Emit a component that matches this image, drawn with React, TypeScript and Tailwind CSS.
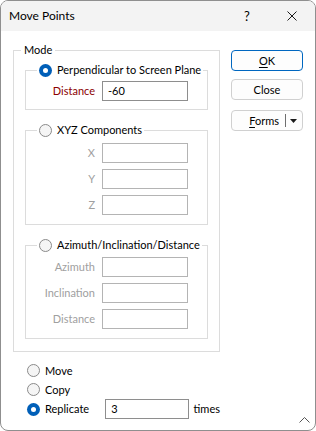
import type { ReactNode } from 'react';

function Radio({ checked }: { checked?: boolean }) {
  if (checked) {
    return (
      <span className="w-[13px] h-[13px] rounded-full bg-[#005fb8] flex items-center justify-center shrink-0">
        <span className="w-[5px] h-[5px] rounded-full bg-white" />
      </span>
    );
  }
  return <span className="w-[13px] h-[13px] rounded-full border border-[#8a8a8a] bg-[#f5f5f5] shrink-0" />;
}

function Field({ label, value, disabled, red }: { label: string; value?: string; disabled?: boolean; red?: boolean }) {
  const labelColor = red ? 'text-[#8b0000]' : disabled ? 'text-[#a0a0a0]' : 'text-black';
  return (
    <div className="flex items-center">
      <span className={`w-[69px] text-right ${labelColor}`}>{label}</span>
      <div
        className={`ml-[7px] w-[86px] h-[20px] border bg-white pl-[5px] flex items-center ${
          disabled ? 'border-[#b4b4b4]' : 'border-[#8e8e8e]'
        }`}
      >
        {value}
      </div>
    </div>
  );
}

function Group({ title, checked, children, className }: { title: string; checked?: boolean; children: ReactNode; className?: string }) {
  return (
    <fieldset className={`min-w-0 border border-[#dcdcdc] ${className ?? ''}`}>
      <legend className="ml-[11px] px-[2px] h-[16px] flex items-center gap-[5px] whitespace-nowrap">
        <Radio checked={checked} />
        <span>{title}</span>
      </legend>
      {children}
    </fieldset>
  );
}

function Button({ children, primary }: { children: ReactNode; primary?: boolean }) {
  return (
    <div
      className={`h-[21px] w-[72px] rounded-[4px] border flex items-center justify-center bg-[#fdfdfd] ${
        primary ? 'border-[#0067c0]' : 'border-[#d0d0d0]'
      }`}
    >
      {children}
    </div>
  );
}

export default function App() {
  return (
    <div className="relative w-[316px] h-[431px] bg-white border border-[#8f8f8f] rounded-[8px] overflow-hidden flex flex-col text-[11px] leading-[16px] text-black font-['Lato','Noto_Sans',sans-serif]">
      {/* title bar */}
      <div className="h-[30px] bg-[#f3f3f3] flex items-center pl-[8px] pr-[18px] shrink-0 text-[12px]">
        <span>Move Points</span>
        <span className="ml-auto w-[10px] text-center text-[13px]">?</span>
        <svg className="ml-[35px]" width="10" height="10" viewBox="0 0 10 10">
          <path d="M0.5 0.5 L9.5 9.5 M9.5 0.5 L0.5 9.5" stroke="#1a1a1a" strokeWidth="1" />
        </svg>
      </div>

      <div className="flex">
        {/* left column */}
        <div className="ml-[12px] mt-[11px] w-[207px] flex flex-col">
          <fieldset className="min-w-0 border border-[#dcdcdc]">
            <legend className="ml-[7px] px-[3px] leading-[16px]">Mode</legend>
            <div className="px-[11px] pt-[4px] pb-[12px] flex flex-col">
              <Group title="Perpendicular to Screen Plane" checked>
                <div className="pt-[3px] pb-[8px]">
                  <Field label="Distance" value="-60" red />
                </div>
              </Group>
              <Group title="XYZ Components" className="mt-[12px]">
                <div className="pt-[5px] pb-[9px] flex flex-col gap-[6px]">
                  <Field label="X" disabled />
                  <Field label="Y" disabled />
                  <Field label="Z" disabled />
                </div>
              </Group>
              <Group title="Azimuth/Inclination/Distance" className="mt-[12px]">
                <div className="pt-[4px] pb-[9px] flex flex-col gap-[6px]">
                  <Field label="Azimuth" disabled />
                  <Field label="Inclination" disabled />
                  <Field label="Distance" disabled />
                </div>
              </Group>
            </div>
          </fieldset>

          <div className="mt-[9px] pl-[14px] flex flex-col">
            <div className="h-[19px] flex items-center gap-[5px]">
              <Radio />
              <span>Move</span>
            </div>
            <div className="h-[19px] flex items-center gap-[5px]">
              <Radio />
              <span>Copy</span>
            </div>
            <div className="h-[20px] flex items-center gap-[5px]">
              <Radio checked />
              <span className="w-[57px]">Replicate</span>
              <div className="w-[86px] h-[20px] border border-[#8e8e8e] pl-[5px] flex items-center">3</div>
              <span>times</span>
            </div>
          </div>
        </div>

        {/* right column */}
        <div className="ml-[11px] mt-[19px] flex flex-col">
          <Button primary>
            <span>
              <span className="underline underline-offset-[2px]">O</span>K
            </span>
          </Button>
          <div className="mt-[8px]">
            <Button>Close</Button>
          </div>
          <div className="mt-[10px] h-[21px] w-[72px] rounded-[4px] border border-[#d0d0d0] bg-[#fdfdfd] flex items-center justify-end pr-[5px]">
            <span>
              <span className="underline underline-offset-[2px]">F</span>orms
            </span>
            <span className="ml-[6px] w-px h-[13px] bg-[#6e6e6e]" />
            <svg className="ml-[4px]" width="7" height="4" viewBox="0 0 7 4">
              <path d="M0 0 L7 0 L3.5 4 Z" fill="#1a1a1a" />
            </svg>
          </div>
        </div>
      </div>

      <svg className="absolute right-[5px] bottom-[7px]" width="11" height="6" viewBox="0 0 11 6">
        <polyline points="0.5,5.5 5.5,0.5 10.5,5.5" fill="none" stroke="#555" strokeWidth="1" />
      </svg>
    </div>
  );
}
